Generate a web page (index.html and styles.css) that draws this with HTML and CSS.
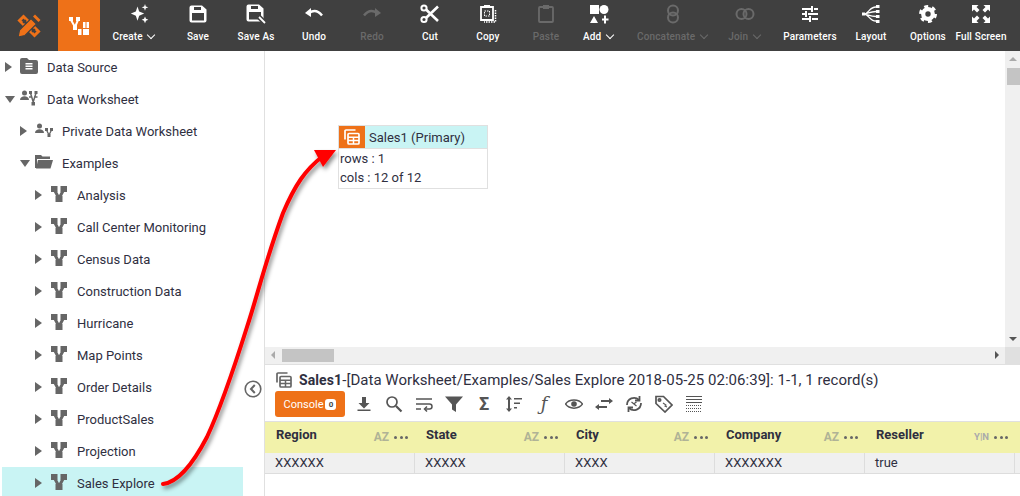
FILE: index.html
```html
<!DOCTYPE html>
<html>
<head>
    <title>Data Worksheet - Sales Explore</title>
    <link rel="stylesheet" href="styles.css">
</head>
<body>
    <svg class="defs" width="0" height="0">
        <symbol id="i-ws" viewBox="0 0 16 16">
            <path d="M0 0h6.500v6H0zM9.500 0H16v6H9.500zM4.500 10h7v6h-7z"/>
            <path d="M3 3l5 9.500L13 3" fill="none" stroke="currentColor" stroke-width="3"/>
        </symbol>
        <symbol id="i-table" viewBox="0 0 16 16">
            <path d="M1 10.500V2a1 1 0 0 1 1-1h9.500" fill="none" stroke="currentColor" stroke-width="1.700"/>
            <rect x="4" y="4.500" width="11" height="10.500" rx="1" fill="none" stroke="currentColor" stroke-width="1.700"/>
            <path d="M4 8.200h11M4 11.500h11M9.500 8.200V15" stroke="currentColor" stroke-width="1.500"/>
        </symbol>
        <symbol id="i-floppy" viewBox="0 0 18 18">
            <path d="M2.500 0.500h10.500l4.500 4v11a2 2 0 0 1-2 2h-13a2 2 0 0 1-2-2v-13a2 2 0 0 1 2-2z"/>
            <path d="M3 8h12v7.500H3z" fill="#404040"/>
            <path d="M5 2h7v3H5z" fill="#404040"/>
        </symbol>
    </svg>

    <div class="toolbar">
        <div class="logo">
            <svg width="24" height="24" viewBox="0 0 24 24">
                <path d="M2.500 6.500l4-4 15 15-4 4z" fill="none" stroke="#ee7118" stroke-width="3"/>
                <path d="M6 9l3-3M11 14l3-3M15 18l3-3" stroke="#404040" stroke-width="1.500"/>
                <path d="M1 23l1.500-7L14 4.500l5.500 5.500L8 21.500z" fill="#ee7118" stroke="#404040" stroke-width="1.200"/>
                <path d="M16 2.500l2-2 5.500 5.500-2 2z" fill="#ee7118"/>
            </svg>
        </div>
        <div class="tab-active">
            <svg width="22" height="20" viewBox="0 0 22 20" fill="#fff">
                <path d="M1 1h4v4H1zM8 1h4v4H8zM5 9h4v5H5z"/>
                <path d="M3 4l4 7 3-7" fill="none" stroke="#fff" stroke-width="2"/>
                <path d="M15 6h2.500v6H15zM18.500 6H21v6h-2.500zM15 13h6v6h-6zM10 13h3.500v6H10z"/>
            </svg>
        </div>
        <div class="tool"><svg width="24" height="24" viewBox="0 0 24 24" fill="#fff"><path d="M9 3l2 6 6 2.500-6 2.500-2 6-2-6-6-2.500 6-2.500zM18 0l1 3 3 1-3 1-1 3-1-3-3-1 3-1zM18 15l1.200 2.800 2.800 1.200-2.800 1.200L18 23l-1.200-2.800L14 19l2.800-1.200z"/></svg><span class="tool-label label-create">Create <i class="caret"></i></span></div>
        <div class="tool"><svg width="18" height="18" viewBox="0 0 18 18" fill="#fff"><use href="#i-floppy"/></svg><span class="tool-label">Save</span></div>
        <div class="tool"><svg width="20" height="20" viewBox="0 0 20 20" fill="#fff"><use href="#i-floppy" width="18" height="18"/><path d="M11 11l8 8" stroke="#404040" stroke-width="5"/><path d="M13 13l6 6" stroke="#fff" stroke-width="1.800"/></svg><span class="tool-label">Save As</span></div>
        <div class="tool"><svg width="20" height="20" viewBox="0 0 20 20"><path d="M5 9c5-3.500 9-2.500 13 2.500" fill="none" stroke="#fff" stroke-width="2.500"/><path d="M1 9l6-5v9z" fill="#fff"/></svg><span class="tool-label">Undo</span></div>
        <div class="tool tool-off"><svg width="20" height="20" viewBox="0 0 20 20"><path d="M15 9C10 5.500 6 6.500 2 11.500" fill="none" stroke="#6a6a6a" stroke-width="2.500"/><path d="M19 9l-6-5v9z" fill="#6a6a6a"/></svg><span class="tool-label">Redo</span></div>
        <div class="tool"><svg width="20" height="20" viewBox="0 0 20 20" fill="none" stroke="#fff"><circle cx="4" cy="4" r="2.600" stroke-width="2"/><circle cx="4" cy="15.500" r="2.600" stroke-width="2"/><path d="M6 5.500L18 17M6 14L18 2.500" stroke-width="2.600"/></svg><span class="tool-label">Cut</span></div>
        <div class="tool"><svg width="20" height="20" viewBox="0 0 20 20" fill="none" stroke="#fff"><path d="M3 3h12v13H3z" stroke-width="1.800"/><path d="M6 1h6v3H6z" fill="#fff" stroke="none"/><path d="M6.500 7h5v5h-5z" stroke-width="1" stroke-dasharray="1.500 1"/><path d="M17.500 6v12H6" stroke-width="1.500" stroke-dasharray="1.500 1"/></svg><span class="tool-label">Copy</span></div>
        <div class="tool tool-off"><svg width="20" height="20" viewBox="0 0 20 20" fill="none" stroke="#6a6a6a"><rect x="3" y="3" width="14" height="15" rx="1" stroke-width="1.800"/><path d="M7 1h6v4H7z" fill="#6a6a6a" stroke="none"/></svg><span class="tool-label">Paste</span></div>
        <div class="tool tool-add"><svg width="20" height="20" viewBox="0 0 20 20" fill="#fff"><path d="M1 1h9v9H1z"/><circle cx="15" cy="5.500" r="4.500"/><path d="M5 12l4 7H1zM13 14.500h2v-3h2v3h2.500v2H17v3h-2v-3h-2z"/></svg><span class="tool-label">Add <i class="caret"></i></span></div>
        <div class="tool tool-off tool-concat"><svg width="20" height="20" viewBox="0 0 20 20" fill="none" stroke="#6a6a6a" stroke-width="2"><circle cx="10" cy="6.500" r="5"/><circle cx="10" cy="13.500" r="5"/></svg><span class="tool-label">Concatenate <i class="caret"></i></span></div>
        <div class="tool tool-off tool-join"><svg width="20" height="20" viewBox="0 0 20 20" fill="none" stroke="#6a6a6a" stroke-width="2"><circle cx="6.500" cy="10" r="5"/><circle cx="13.500" cy="10" r="5"/></svg><span class="tool-label">Join <i class="caret"></i></span></div>
        <div class="tool tool-param"><svg width="18" height="18" viewBox="0 0 18 18" fill="#fff"><path d="M1 3h9v2H1zM13 3h4v2h-4zM10 1h2v6h-2zM1 8h3v2H1zM7 8h10v2H7zM4 6h2v6H4zM1 13h7v2H1zM11 13h6v2h-6zM8 11h2v6H8z"/></svg><span class="tool-label">Parameters</span></div>
        <div class="tool tool-layout"><svg width="20" height="20" viewBox="0 0 20 20" fill="#fff"><path d="M1 8.500h3v3H1zM15 1h3.500v3H15zM15 6h3.500v3H15zM15 11h3.500v3H15zM15 16h3.500v3H15z"/><path d="M3 10c5 0 5-7 12-7M3 10c5-1 6-2 12-2.500M3 10c5 1 6 2 12 2.500M3 10c5 0 5 7 12 7" fill="none" stroke="#fff" stroke-width="1.300"/></svg><span class="tool-label">Layout</span></div>
        <div class="tool tool-opts"><svg width="18" height="18" viewBox="0 0 18 18" fill="none" stroke="#fff"><circle cx="9" cy="9" r="4.800" stroke-width="4.200"/><circle cx="9" cy="9" r="7.500" stroke-width="3" stroke-dasharray="3.900 3.950"/></svg><span class="tool-label">Options</span></div>
        <div class="tool tool-full"><svg width="18" height="18" viewBox="0 0 18 18" fill="#fff"><path d="M0 0h6.500L4.500 2 7.500 5 5 7.500 2 4.500 0 6.500zM18 0v6.500l-2-2-3 3L10.500 5l3-3-2-2zM0 18v-6.500l2 2 3-3L7.500 13l-3 3 2 2zM18 18h-6.500l2-2-3-3 2.500-2.500 3 3 2-2z"/></svg><span class="tool-label">Full Screen</span></div>
    </div>

    <div class="main">
        <div class="sidebar">
            <div class="tree-row"><i class="arrow"></i><svg class="tree-icon" viewBox="0 0 18 16" fill="#666"><path d="M0 2a2 2 0 0 1 2-2h5l2 2h7a2 2 0 0 1 2 2v10a2 2 0 0 1-2 2H2a2 2 0 0 1-2-2z"/><path d="M5.500 5h7v1.500h-7zM5.500 7.500h7V9h-7zM5.500 10h7v1.500h-7z" fill="#fff"/></svg>Data Source</div>
            <div class="tree-row"><i class="arrow arrow-down"></i><svg class="tree-icon" viewBox="0 0 18 16" fill="#666"><circle cx="4.500" cy="3" r="2.500"/><path d="M0 10c0-5 9-5 9 0z"/><path d="M9 1h3v3H9zM14.500 1h3v3h-3zM11.500 12h3.500v3.500h-3.500z"/><path d="M10.500 3l2.700 9 2.800-9M9 7h3M14 7h3.500" fill="none" stroke="#666" stroke-width="1.500"/></svg>Data Worksheet</div>
            <div class="tree-row level1"><i class="arrow"></i><svg class="tree-icon" viewBox="0 0 18 16" fill="#666"><circle cx="4.500" cy="4" r="2.500"/><path d="M0 11c0-5 9-5 9 0z"/><path d="M10 6h3v3h-3zM15 6h3v3h-3zM12.500 12h3v3h-3z"/><path d="M11.500 8l2.500 5 2.500-5" fill="none" stroke="#666" stroke-width="1.300"/></svg>Private Data Worksheet</div>
            <div class="tree-row level1"><i class="arrow arrow-down"></i><svg class="tree-icon" viewBox="0 0 18 16" fill="#666"><path d="M0 1h6l1.500 1.500H15V5H2v9H0z"/><path d="M3 6h15l-2.500 8.500H1z"/></svg>Examples</div>
            <div class="tree-row level2"><i class="arrow"></i><svg class="tree-icon ws" fill="#666" color="#666"><use href="#i-ws"/></svg>Analysis</div>
            <div class="tree-row level2"><i class="arrow"></i><svg class="tree-icon ws" fill="#666" color="#666"><use href="#i-ws"/></svg>Call Center Monitoring</div>
            <div class="tree-row level2"><i class="arrow"></i><svg class="tree-icon ws" fill="#666" color="#666"><use href="#i-ws"/></svg>Census Data</div>
            <div class="tree-row level2"><i class="arrow"></i><svg class="tree-icon ws" fill="#666" color="#666"><use href="#i-ws"/></svg>Construction Data</div>
            <div class="tree-row level2"><i class="arrow"></i><svg class="tree-icon ws" fill="#666" color="#666"><use href="#i-ws"/></svg>Hurricane</div>
            <div class="tree-row level2"><i class="arrow"></i><svg class="tree-icon ws" fill="#666" color="#666"><use href="#i-ws"/></svg>Map Points</div>
            <div class="tree-row level2"><i class="arrow"></i><svg class="tree-icon ws" fill="#666" color="#666"><use href="#i-ws"/></svg>Order Details</div>
            <div class="tree-row level2"><i class="arrow"></i><svg class="tree-icon ws" fill="#666" color="#666"><use href="#i-ws"/></svg>ProductSales</div>
            <div class="tree-row level2"><i class="arrow"></i><svg class="tree-icon ws" fill="#666" color="#666"><use href="#i-ws"/></svg>Projection</div>
            <div class="tree-row level2 selected"><i class="arrow"></i><svg class="tree-icon ws" fill="#666" color="#666"><use href="#i-ws"/></svg>Sales Explore</div>
            <svg class="collapse" width="18" height="18" viewBox="0 0 18 18" fill="none" stroke="#666"><circle cx="9" cy="9" r="7.800" stroke-width="1.600"/><path d="M10.800 5L7 9l3.800 4" stroke-width="2"/></svg>
        </div>

        <div class="content">
            <div class="canvas-wrap">
                <div class="canvas">
                    <div class="node">
                        <div class="node-head">
                            <span class="node-icon"><svg width="16" height="16" color="#fff"><use href="#i-table"/></svg></span>
                            <span class="node-title">Sales1 (Primary)</span>
                        </div>
                        <div class="node-line">rows : 1</div>
                        <div class="node-line">cols : 12 of 12</div>
                    </div>
                </div>
                <div class="vscroll">
                    <i class="sb-up"></i>
                    <i class="vthumb"></i>
                    <i class="sb-down"></i>
                </div>
                <div class="hscroll">
                    <i class="sb-left"></i>
                    <i class="hthumb"></i>
                    <i class="sb-right"></i>
                </div>
                <div class="corner"></div>
            </div>

            <div class="details">
                <div class="title-row">
                    <svg width="16" height="16" color="#666"><use href="#i-table"/></svg>
                    <span><b>Sales1</b>-[Data Worksheet/Examples/Sales Explore 2018-05-25 02:06:39]: 1-1, 1 record(s)</span>
                </div>
                <div class="action-row">
                    <button class="console">Console<span class="badge">0</span></button>
                    <div class="actions">
                        <svg viewBox="0 0 18 18" fill="#555"><path d="M7 2h4v6h3.500L9 13.500 3.500 8H7zM2.500 14.500h13V16h-13z"/></svg>
                        <svg viewBox="0 0 18 18" fill="none" stroke="#555"><circle cx="7" cy="7" r="5" stroke-width="1.700"/><path d="M11 11l5.500 5.500" stroke-width="2.200"/></svg>
                        <svg viewBox="0 0 18 18" fill="none" stroke="#555" stroke-width="1.500"><path d="M1 4h16M1 9h13.500a2.200 2.200 0 0 1 0 5H10M1 14h5"/><path d="M12 11.500L9.500 14l2.500 2.500"/></svg>
                        <svg viewBox="0 0 18 18" fill="#555"><path d="M0 1.500h18L11 9.500V17l-4-2.500V9.500z"/></svg>
                        <span class="glyph">Σ</span>
                        <svg viewBox="0 0 18 18" fill="#555"><path d="M4 1l3 3.500H5v9h2L4 17l-3-3.500h2v-9H1zM9 3h8v1.500H9zM9 7.500h6V9H9zM9 12h3v1.500H9z"/></svg>
                        <span class="glyph glyph-f">ƒ</span>
                        <svg viewBox="0 0 18 18"><path d="M0.500 9C4 3.500 14 3.500 17.500 9 14 14.500 4 14.500 0.500 9z" fill="none" stroke="#555" stroke-width="1.500"/><circle cx="9" cy="9" r="2.800" fill="#555"/></svg>
                        <svg viewBox="0 0 18 18" fill="#555"><path d="M6 5h8V3l4 3-4 3V7H6zM12 13H4v2l-4-3 4-3v2h8z"/></svg>
                        <svg viewBox="0 0 18 18" fill="none" stroke="#555" stroke-width="1.800"><path d="M2 10a7 7 0 0 1 12-5M16 8a7 7 0 0 1-12 5"/><path d="M14.500 1v4.500H10M3.500 17v-4.500H8"/><path d="M6.500 7l5 4M11.500 7l-3 2" stroke-width="1.200"/></svg>
                        <svg viewBox="0 0 18 18" fill="none" stroke="#555" stroke-width="1.700"><path d="M1 1.500h7.500l8.500 8.500-7 7L1 8.500z"/><circle cx="4.500" cy="5" r="1.200"/><path d="M8 8l3 2-1 1 2 1" stroke-width="1.100"/></svg>
                        <svg viewBox="0 0 18 18" stroke="#555"><path d="M1 1.500h16M1 4.500h16M1 7.500h16" stroke-width="1.200"/><path d="M1 10.500h16M1 13.500h16M1 16.500h16" stroke-width="1.200" stroke-dasharray="1 1"/></svg>
                    </div>
                </div>
                <div class="grid-head">
                    <div class="col-head"><b>Region</b><span class="type">AZ</span><span class="dots"><i></i><i></i><i></i></span></div>
                    <div class="col-head"><b>State</b><span class="type">AZ</span><span class="dots"><i></i><i></i><i></i></span></div>
                    <div class="col-head"><b>City</b><span class="type">AZ</span><span class="dots"><i></i><i></i><i></i></span></div>
                    <div class="col-head"><b>Company</b><span class="type">AZ</span><span class="dots"><i></i><i></i><i></i></span></div>
                    <div class="col-head"><b>Reseller</b><span class="type type-bool">Y|N</span><span class="dots"><i></i><i></i><i></i></span></div>
                </div>
                <div class="grid-row">
                    <div class="cell">XXXXXX</div>
                    <div class="cell">XXXXX</div>
                    <div class="cell">XXXX</div>
                    <div class="cell">XXXXXXX</div>
                    <div class="cell">true</div>
                </div>
            </div>
        </div>
    </div>

    <svg class="pointer" width="1020" height="496" viewBox="0 0 1020 496">
        <defs>
            <filter id="soft" x="-20%" y="-20%" width="140%" height="140%">
                <feDropShadow dx="2" dy="3" stdDeviation="2" flood-color="#000" flood-opacity="0.45"/>
            </filter>
        </defs>
        <g filter="url(#soft)">
            <path d="M163 484C180 482 195 460 207 437C222 405 235 365 247 327C257 297 265 262 283 213C295 185 305 170 323 156" fill="none" stroke="#f00" stroke-width="4" stroke-linecap="round"/>
            <path d="M336 150L314 150L323 167z" fill="#f00"/>
        </g>
    </svg>
</body>
</html>
```

FILE: styles.css
```css
html,
body {
    margin: 0;
    height: 496px;
    overflow: hidden;
}

body {
    position: relative;
    display: flex;
    flex-direction: column;
    font-family: Roboto, "Liberation Sans", sans-serif;
    font-size: 13px;
    color: #2f2f3f;
    background-color: #fff;
}

.defs {
    position: absolute;
}

/* top toolbar */
.toolbar {
    display: flex;
    flex: none;
    height: 51px;
    background-color: #404040;
    color: #fff;
}

.logo {
    display: flex;
    align-items: center;
    justify-content: center;
    width: 58px;
}

.tab-active {
    display: flex;
    align-items: center;
    justify-content: center;
    width: 42px;
    margin-right: 11px;
    background-color: #ee7118;
}

.tool {
    display: flex;
    flex: none;
    flex-direction: column;
    align-items: center;
    width: 58px;
    padding-top: 4px;
    box-sizing: border-box;
}

.tool svg {
    height: 20px;
    flex: none;
}

.tool-label {
    margin-top: 7px;
    font-size: 10px;
    font-weight: 500;
    letter-spacing: 0.15px;
    line-height: 12px;
    white-space: nowrap;
}

.label-create {
    margin-right: 11px;
}

.tool-off {
    color: #6a6a6a;
}

.tool-add {
    width: 48px;
}

.tool-concat {
    width: 100px;
}

.tool-join {
    width: 44px;
    margin-right: 10px;
}

.tool-param {
    width: 66px;
}

.tool-layout {
    width: 56px;
}

.tool-opts {
    width: 58px;
}

.tool-full {
    width: 48px;
}

.caret {
    display: inline-block;
    width: 5px;
    height: 5px;
    margin: 0 2px 2px 3px;
    border-right: 1.500px solid currentColor;
    border-bottom: 1.500px solid currentColor;
    transform: rotate(45deg);
}

/* main area */
.main {
    display: flex;
    flex: 1;
    min-height: 0;
}

.sidebar {
    position: relative;
    flex: none;
    width: 264px;
    overflow: hidden;
}

.tree-row {
    display: flex;
    align-items: center;
    width: 241px;
    height: 32px;
    margin-left: 2px;
    padding-left: 3px;
    box-sizing: border-box;
}

.tree-row.level1 {
    padding-left: 18px;
}

.tree-row.level2 {
    padding-left: 33px;
}

.tree-row.selected {
    background-color: #c9f4f4;
}

.arrow {
    flex: none;
    width: 0;
    height: 0;
    margin-right: 8px;
    border-top: 5px solid transparent;
    border-bottom: 5px solid transparent;
    border-left: 7px solid #666;
}

.arrow-down {
    width: 0;
    margin-right: 5px;
    border-top: 7px solid #666;
    border-right: 5px solid transparent;
    border-bottom: 0;
    border-left: 5px solid transparent;
}

.tree-icon {
    flex: none;
    width: 18px;
    height: 16px;
    margin: -3px 9px 0 0;
}

.collapse {
    position: absolute;
    top: 329px;
    left: 244px;
}

.content {
    display: flex;
    flex: 1;
    flex-direction: column;
    min-width: 0;
    border-left: 1px solid #e0e0e0;
}

.canvas-wrap {
    display: grid;
    flex: none;
    grid-template-columns: 740px 15px;
    grid-template-rows: 296px 17px;
    border-bottom: 1px solid #e0e0e0;
}

.canvas {
    position: relative;
}

.node {
    position: absolute;
    top: 74px;
    left: 73px;
    width: 148px;
    border: 1px solid #e0e0e0;
}

.node-head {
    display: flex;
    align-items: center;
    height: 22px;
    background-color: #c9f4f4;
    border-bottom: 1px solid #e0e0e0;
}

.node-icon {
    display: flex;
    align-items: center;
    justify-content: center;
    width: 26px;
    height: 22px;
    background-color: #ee7118;
}

.node-title {
    margin-left: 4px;
}

.node-line {
    height: 19px;
    padding-left: 1px;
    line-height: 19px;
}

.node-line:last-child {
    height: 20px;
}

.vscroll {
    position: relative;
    background-color: #f0f0f0;
}

.vthumb {
    position: absolute;
    top: 17px;
    right: 0;
    width: 13px;
    height: 17px;
    background-color: #c4c4c4;
}

.sb-up,
.sb-down {
    position: absolute;
    left: 4px;
    width: 0;
    height: 0;
    border-right: 4px solid transparent;
    border-left: 4px solid transparent;
}

.sb-up {
    top: 6px;
    border-bottom: 4px solid #aaa;
}

.sb-down {
    bottom: 6px;
    border-top: 4px solid #555;
}

.hscroll {
    position: relative;
    background-color: #f0f0f0;
}

.hthumb {
    position: absolute;
    top: 2px;
    left: 17px;
    width: 52px;
    height: 13px;
    background-color: #c4c4c4;
}

.sb-left,
.sb-right {
    position: absolute;
    top: 4px;
    width: 0;
    height: 0;
    border-top: 4px solid transparent;
    border-bottom: 4px solid transparent;
}

.sb-left {
    left: 6px;
    border-right: 4px solid #aaa;
}

.sb-right {
    right: 6px;
    border-left: 4px solid #555;
}

.corner {
    background-color: #e0e0e0;
}

/* details below the canvas */
.details {
    flex: 1;
    overflow: hidden;
}

.title-row {
    display: flex;
    align-items: center;
    gap: 7px;
    height: 26px;
    padding: 3px 0 0 11px;
    box-sizing: border-box;
    font-size: 15px;
    letter-spacing: 0.03px;
}

.title-row b {
    font-size: 14px;
    letter-spacing: 0.1px;
}

.action-row {
    display: flex;
    align-items: center;
    height: 26px;
    padding-left: 10px;
}

.console {
    display: flex;
    align-items: center;
    justify-content: center;
    gap: 2px;
    width: 70px;
    height: 26px;
    padding: 0;
    border: none;
    border-radius: 3px;
    background-color: #ee7118;
    color: #fff;
    font-family: inherit;
    font-size: 11px;
}

.badge {
    width: 11px;
    height: 11px;
    border-radius: 3px;
    background-color: #fff;
    color: #444;
    font-size: 8px;
    font-weight: 700;
    line-height: 11px;
}

.actions {
    display: flex;
    align-items: center;
    gap: 12px;
    margin-left: 10px;
}

.actions svg {
    flex: none;
    width: 18px;
    height: 18px;
}

.glyph {
    flex: none;
    width: 18px;
    color: #555;
    font-size: 18px;
    font-weight: 700;
    line-height: 18px;
    text-align: center;
}

.glyph-f {
    font-family: "DejaVu Serif", serif;
    font-style: italic;
    font-weight: 400;
}

.grid-head {
    display: flex;
    height: 32px;
    margin-top: 4px;
    background-color: #f2f2aa;
    border-top: 1px solid #e0e0e0;
    box-sizing: border-box;
}

.col-head {
    display: flex;
    align-items: flex-start;
    flex: none;
    width: 150px;
    height: 31px;
    padding: 5px 7px 0 11px;
    box-sizing: border-box;
}

.col-head b {
    flex: 1;
    font-weight: 700;
}

.type {
    margin-top: 3px;
    color: #b0b396;
    font-size: 12px;
    font-weight: 700;
}

.type-bool {
    margin-top: 4px;
    color: #aaa;
    font-size: 9.500px;
}

.dots {
    display: flex;
    gap: 2.500px;
    margin: 9px 0 0 5px;
}

.dots i {
    width: 3px;
    height: 3px;
    border-radius: 50%;
    background-color: #666;
}

.grid-row {
    display: flex;
    height: 21px;
    background-color: #f0f0f0;
    border-bottom: 1px solid #ddd;
    box-sizing: border-box;
}

.cell {
    flex: none;
    width: 150px;
    padding-left: 10px;
    box-sizing: border-box;
    border-right: 1px solid #ddd;
    line-height: 20px;
}

.pointer {
    position: absolute;
    top: 0;
    left: 0;
    pointer-events: none;
}
```
